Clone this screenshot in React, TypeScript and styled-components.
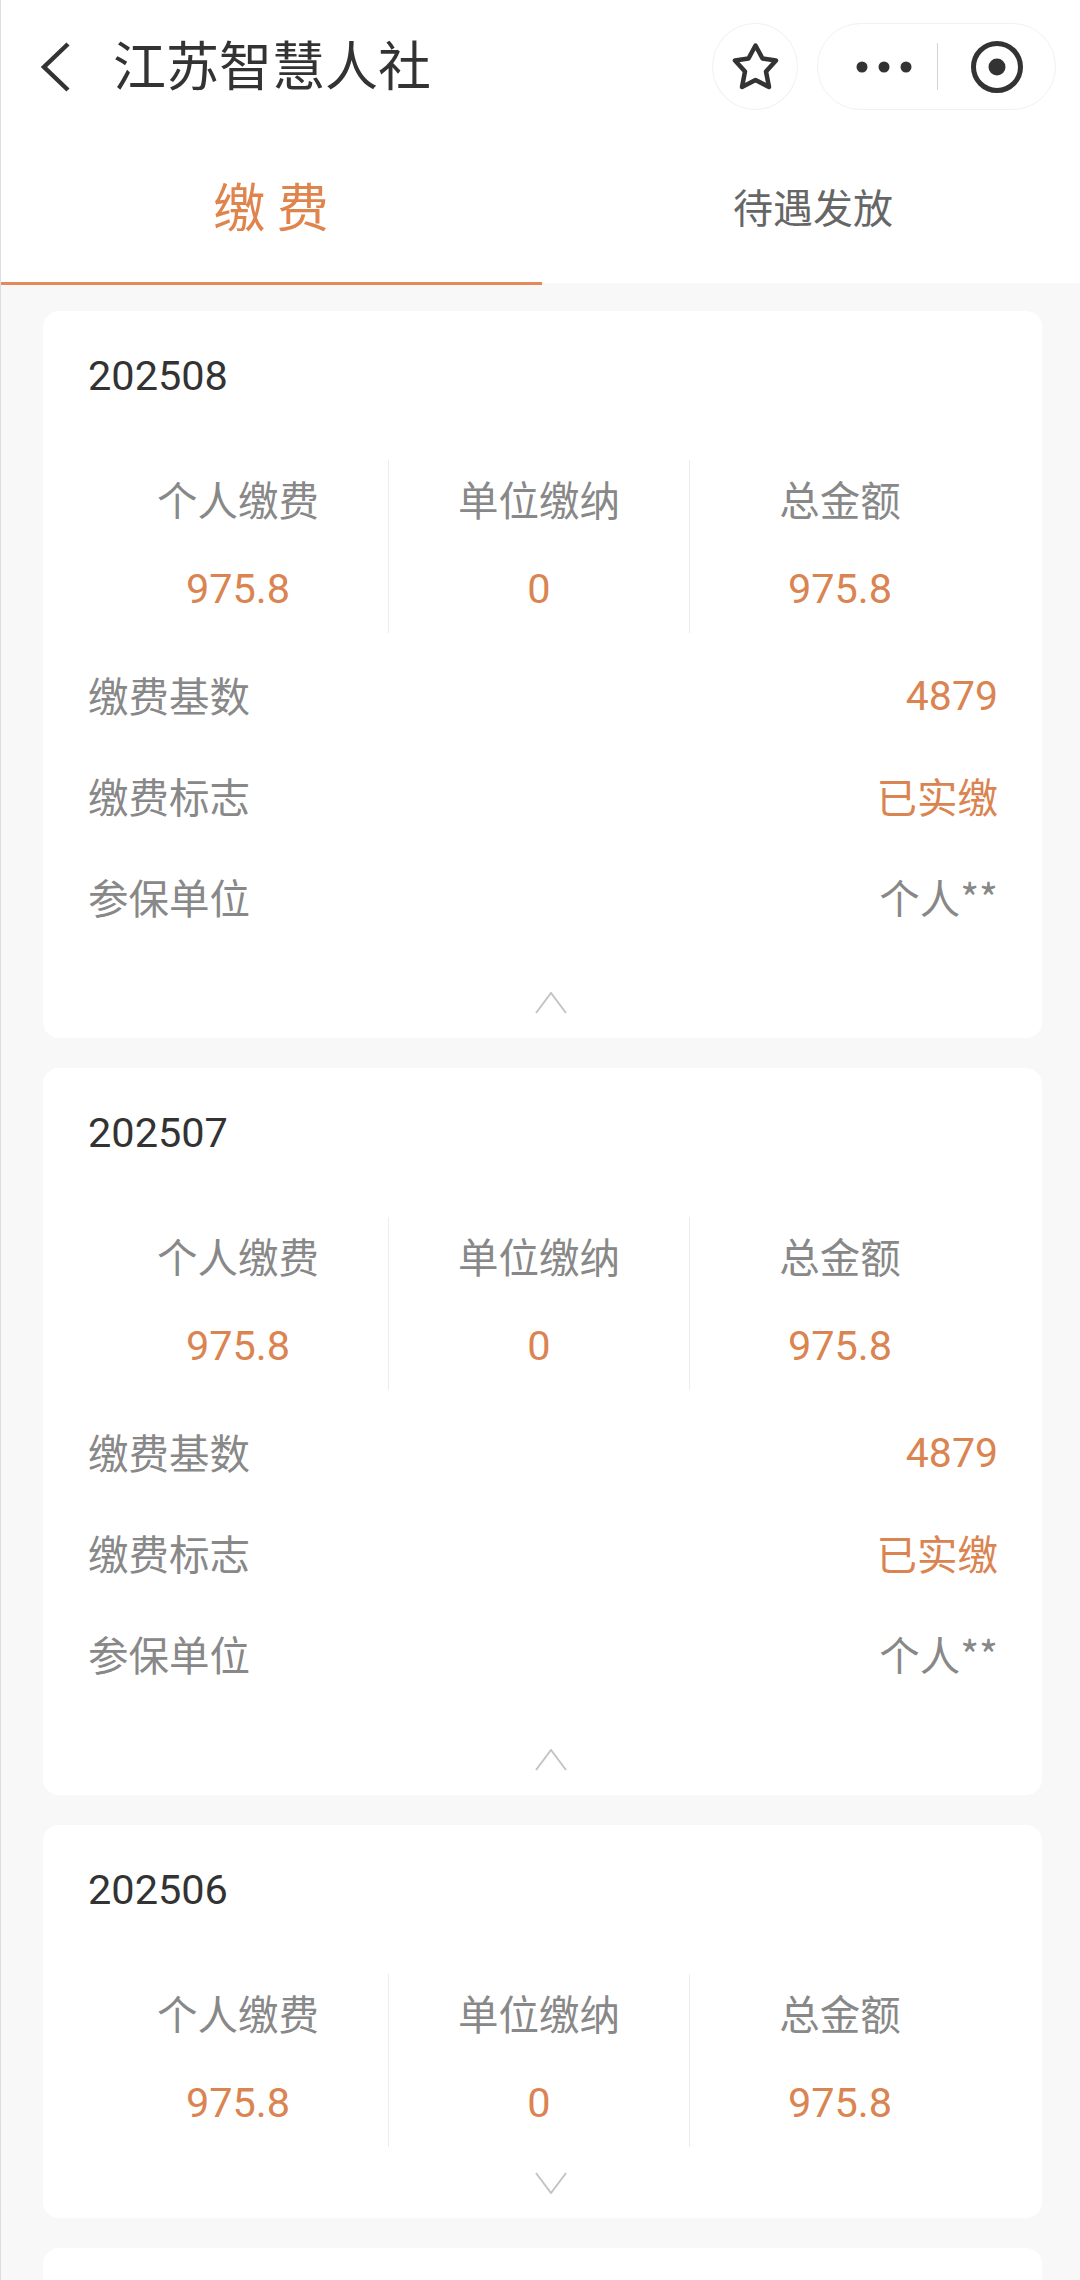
import { createGlobalStyle, styled } from "styled-components";

const GlobalStyle = createGlobalStyle`
  html, body {
    margin: 0;
    padding: 0;
    background: #f8f8f8;
  }

  * {
    box-sizing: border-box;
  }
`;

const ORANGE = "#da8451";

const Page = styled.div`
  position: relative;
  width: 1080px;
  height: 2280px;
  overflow: hidden;
  background: #f8f8f8;
  font-family: "Noto Sans CJK SC", Roboto, sans-serif;

  &::before {
    content: "";
    position: absolute;
    left: 0;
    top: 0;
    bottom: 0;
    width: 1px;
    background: #dedede;
  }
`;

const NavBar = styled.header`
  display: flex;
  align-items: center;
  height: 133px;
  padding: 0 24px 0 40px;
  background: #fff;
`;

const BackIcon = styled.svg`
  width: 30px;
  height: 50px;
  margin-right: 43px;
  flex-shrink: 0;
`;

const NavTitle = styled.h1`
  flex: 1;
  margin: 0 0 7px;
  font-size: 53px;
  font-weight: 400;
  line-height: 70px;
  color: #333;
`;

const StarButton = styled.div`
  display: flex;
  align-items: center;
  justify-content: center;
  width: 86px;
  height: 87px;
  margin-right: 19px;
  border: 1px solid #f1f1f1;
  border-radius: 50%;
`;

const Capsule = styled.div`
  display: flex;
  align-items: center;
  width: 239px;
  height: 87px;
  padding-left: 38px;
  border: 1px solid #f1f1f1;
  border-radius: 44px;
`;

const Dots = styled.svg`
  width: 56px;
  height: 12px;
  margin-right: 25px;
`;

const CapsuleDivider = styled.span`
  width: 1px;
  height: 47px;
  margin-right: 33px;
  background: #d4d4d4;
`;

const TabBar = styled.nav`
  display: flex;
  height: 152px;
`;

const Tab = styled.div<{ $active?: boolean }>`
  display: flex;
  align-items: center;
  justify-content: center;
  width: ${({ $active }) => ($active ? "542px" : "538px")};
  height: 100%;
  padding-bottom: ${({ $active }) => ($active ? "7px" : "4px")};
  padding-left: ${({ $active }) => ($active ? "0" : "4px")};
  font-size: ${({ $active }) => ($active ? "52px" : "40px")};
  color: ${({ $active }) => ($active ? "#e0844d" : "#666")};
  background: #fff;
  border-bottom: ${({ $active }) => ($active ? "3px solid #e28a58" : "2px solid #f8f8f8")};
`;

const CardList = styled.main`
  display: flex;
  flex-direction: column;
  gap: 30px;
  padding: 26px 38px 0 43px;
`;

const Card = styled.section`
  padding: 38px 44px 0 45px;
  background: #fff;
  border-radius: 16px;
`;

const EmptyCard = styled(Card)`
  height: 120px;
`;

const Period = styled.div`
  font-family: Roboto, sans-serif;
  font-size: 41.5px;
  line-height: 54px;
  color: #333;
`;

const Stats = styled.div`
  display: grid;
  grid-template-columns: 300px 301px 301px;
  height: 173px;
  margin-top: 57px;
`;

const Stat = styled.div`
  display: flex;
  flex-direction: column;
  align-items: center;
  gap: 34px;
  padding-top: 11px;
  border-left: 1px solid #ececec;

  &:first-child {
    border-left: 0;
  }
`;

const StatLabel = styled.div`
  font-size: 40.5px;
  line-height: 56px;
  color: #888;
`;

const StatValue = styled.div`
  font-family: Roboto, sans-serif;
  font-size: 41.5px;
  line-height: 56px;
  color: ${ORANGE};
`;

const Rows = styled.div`
  padding: 14px 0 17px;
`;

const Row = styled.div`
  display: flex;
  align-items: center;
  justify-content: space-between;
  height: 101px;
  padding-bottom: 6px;
  font-size: 40.5px;
`;

const RowLabel = styled.span`
  color: #888;
`;

const RowValue = styled.span<{ $muted?: boolean }>`
  color: ${({ $muted }) => ($muted ? "#888" : ORANGE)};
`;

const RowNumber = styled(RowValue)`
  padding-top: 3px;
  font-family: Roboto, sans-serif;
  font-size: 41px;
`;

const Footer = styled.div`
  display: flex;
  align-items: center;
  justify-content: center;
  height: 71px;
  padding-left: 16px;
`;

const Chevron = styled.svg`
  width: 32px;
  height: 22px;
`;

interface RecordItem {
  period: string;
  personal: string;
  company: string;
  total: string;
  base?: string;
  status?: string;
  employer?: string;
}

const records: RecordItem[] = [
  { period: "202508", personal: "975.8", company: "0", total: "975.8", base: "4879", status: "已实缴", employer: "个人**" },
  { period: "202507", personal: "975.8", company: "0", total: "975.8", base: "4879", status: "已实缴", employer: "个人**" },
  { period: "202506", personal: "975.8", company: "0", total: "975.8" },
];

function RecordCard({ item }: { item: RecordItem }) {
  const expanded = Boolean(item.base);

  return (
    <Card>
      <Period>{item.period}</Period>
      <Stats>
        <Stat>
          <StatLabel>个人缴费</StatLabel>
          <StatValue>{item.personal}</StatValue>
        </Stat>
        <Stat>
          <StatLabel>单位缴纳</StatLabel>
          <StatValue>{item.company}</StatValue>
        </Stat>
        <Stat>
          <StatLabel>总金额</StatLabel>
          <StatValue>{item.total}</StatValue>
        </Stat>
      </Stats>
      {expanded && (
        <Rows>
          <Row>
            <RowLabel>缴费基数</RowLabel>
            <RowNumber>{item.base}</RowNumber>
          </Row>
          <Row>
            <RowLabel>缴费标志</RowLabel>
            <RowValue>{item.status}</RowValue>
          </Row>
          <Row>
            <RowLabel>参保单位</RowLabel>
            <RowValue $muted>{item.employer}</RowValue>
          </Row>
        </Rows>
      )}
      <Footer>
        <Chevron viewBox="0 0 32 22" fill="none" stroke="#c4c4c4" strokeWidth="2">
          <path d={expanded ? "M1 21 L16 1 L31 21" : "M1 1 L16 21 L31 1"} />
        </Chevron>
      </Footer>
    </Card>
  );
}

export default function App() {
  return (
    <Page>
      <GlobalStyle />
      <NavBar>
        <BackIcon viewBox="0 0 30 50" fill="none" stroke="#333" strokeWidth="4.5">
          <path d="M28 2 L4 25 L28 48" />
        </BackIcon>
        <NavTitle>江苏智慧人社</NavTitle>
        <StarButton>
          <svg width="47" height="49" viewBox="0 0 47 49" fill="none" stroke="#333" strokeWidth="4.5" strokeLinejoin="round">
            <path d="M23.5 3.5 L30.5 16.5 L44 18.5 L34 29.5 L37 45 L23.5 38 L10 45 L13 29.5 L3 18.5 L16.5 16.5 Z" />
          </svg>
        </StarButton>
        <Capsule>
          <Dots viewBox="0 0 56 12" fill="#333">
            <circle cx="6" cy="6" r="5.5" />
            <circle cx="28" cy="6" r="5.5" />
            <circle cx="50" cy="6" r="5.5" />
          </Dots>
          <CapsuleDivider />
          <svg width="52" height="52" viewBox="0 0 52 52" fill="none">
            <circle cx="26" cy="26" r="23.5" stroke="#333" strokeWidth="5" />
            <circle cx="26" cy="26" r="8.5" fill="#333" />
          </svg>
        </Capsule>
      </NavBar>
      <TabBar>
        <Tab $active>缴 费</Tab>
        <Tab>待遇发放</Tab>
      </TabBar>
      <CardList>
        {records.map((item) => (
          <RecordCard key={item.period} item={item} />
        ))}
        <EmptyCard />
      </CardList>
    </Page>
  );
}
